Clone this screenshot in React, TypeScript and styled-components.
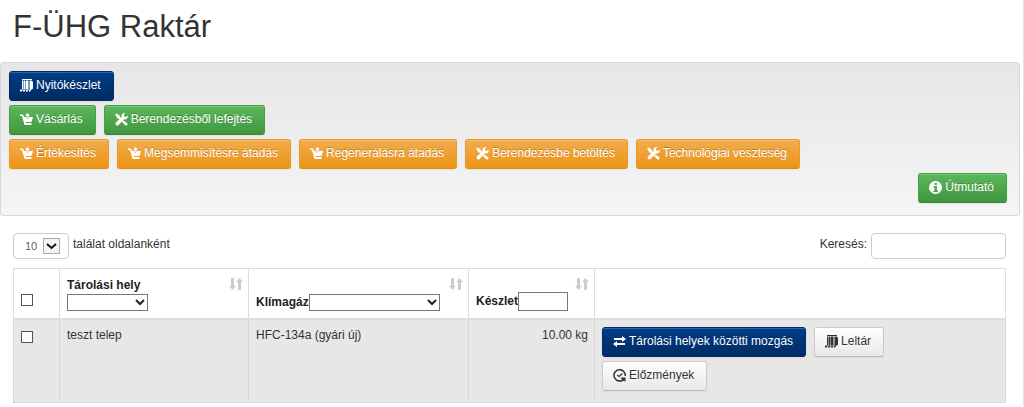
import React from 'react';
import styled, { createGlobalStyle, css } from 'styled-components';

const GlobalStyle = createGlobalStyle`
  *, *::before, *::after { box-sizing: border-box; }
  body {
    margin: 0;
    background: #fff;
    color: #333;
    font: 12px/20px "Liberation Sans", Arial, sans-serif;
  }
  button, input, select { font: inherit; color: inherit; margin: 0; }
`;

type Tone = 'navy' | 'green' | 'orange' | 'light';

const tones = {
  navy: css`
    color: #fff;
    border-color: #002b66;
    background: linear-gradient(#003e8a, #002c62);
    text-shadow: 0 -1px 0 rgba(0, 0, 0, 0.25);
  `,
  green: css`
    color: #fff;
    border-color: #459f45 #459f45 #37843a;
    background: linear-gradient(#5cb85c, #409640);
    text-shadow: 0 -1px 0 rgba(0, 0, 0, 0.25);
  `,
  orange: css`
    color: #fff;
    border-color: #e89a2c #e89a2c #e08e1a;
    background: linear-gradient(#f0ad4e, #ee9315);
    text-shadow: 0 -1px 0 rgba(0, 0, 0, 0.25);
  `,
  light: css`
    color: #333;
    border-color: #ccc #ccc #bbb;
    background: linear-gradient(#fff, #e8e8e8);
    text-shadow: 0 1px 1px rgba(255, 255, 255, 0.75);
  `,
};

const Page = styled.main`
  border-right: 1px solid #e4e4e4;
  padding-bottom: 3px;
`;

const Title = styled.h1`
  margin: 0;
  padding: 7px 13px 15px;
  font-size: 31px;
  line-height: 40px;
  font-weight: 400;
`;

const Panel = styled.section`
  display: flex;
  flex-direction: column;
  gap: 4px;
  margin-right: 3px;
  padding: 8px 12px 12px 8px;
  border: 1px solid #d8d8d8;
  border-radius: 3px;
  background: linear-gradient(#e6e6e6, #f5f5f5);
`;

const ButtonRow = styled.div<{ $end?: boolean }>`
  display: flex;
  flex-wrap: wrap;
  gap: 4px 8px;
  justify-content: ${p => (p.$end ? 'flex-end' : 'flex-start')};
`;

const RowActions = styled(ButtonRow)`
  padding: 0 8px 4px 0;
`;

const Button = styled.button<{ $tone: Tone }>`
  display: inline-flex;
  align-items: center;
  gap: 3px;
  height: 30px;
  padding: 0 12px 1px 10px;
  border: 1px solid;
  border-radius: 3px;
  box-shadow: inset 0 1px 0 rgba(255, 255, 255, 0.2), 0 1px 2px rgba(0, 0, 0, 0.05);
  white-space: nowrap;
  cursor: pointer;
  ${p => tones[p.$tone]}
`;

const Label = styled.span`
  padding-bottom: 1px;
`;

const Glyph = styled.svg`
  width: 13px;
  height: 13px;
  flex: none;
  fill: currentColor;
`;

const Toolbar = styled.div`
  display: flex;
  justify-content: space-between;
  align-items: center;
  padding: 17px 17px 9px 13px;
`;

const Field = styled.label`
  display: flex;
  align-items: center;
  gap: 4px;
`;

const FieldText = styled.span`
  padding-bottom: 4px;
`;

const SearchInput = styled.input`
  width: 135px;
  height: 26px;
  padding: 2px 6px;
  border: 1px solid #ccc;
  border-radius: 4px;
  background: #fff;
`;

const SelectWrap = styled.span`
  position: relative;
  display: inline-flex;
`;

const LengthSelect = styled.select`
  appearance: none;
  width: 56px;
  height: 26px;
  padding: 0 0 0 11px;
  border: 1px solid #ccc;
  border-radius: 4px;
  background: #fff;
  color: #666;
  font-size: 11px;
`;

const LengthArrow = styled.svg`
  position: absolute;
  right: 9px;
  top: 5px;
  width: 17px;
  height: 16px;
  pointer-events: none;
`;

const FilterSelect = styled.select<{ $width: number }>`
  appearance: none;
  width: ${p => p.$width}px;
  height: 17px;
  border: 1px solid #777;
  border-radius: 0;
  background: #fff;
`;

const FilterArrow = styled.svg`
  position: absolute;
  right: 3px;
  top: 4px;
  width: 10px;
  height: 8px;
  pointer-events: none;
`;

const FilterInput = styled.input`
  width: 50px;
  height: 19px;
  border: 1px solid #777;
  background: #fff;
`;

const TableArea = styled.div`
  padding: 0 17px 0 13px;
`;

const Table = styled.table`
  width: 100%;
  table-layout: fixed;
  border-collapse: collapse;
`;

const Col = styled.col<{ $width?: number }>`
  width: ${p => (p.$width ? `${p.$width}px` : 'auto')};
`;

const HeadCell = styled.th`
  padding: 8px 5px 7px 7px;
  border: 1px solid #ddd;
  border-bottom-width: 2px;
  text-align: left;
  vertical-align: bottom;
  line-height: 16px;
  color: #222;
`;

const Cell = styled.td<{ $right?: boolean }>`
  padding: 7px 6px 7px 7px;
  border: 1px solid #d8d8d8;
  background: #e7e7e7;
  text-align: ${p => (p.$right ? 'right' : 'left')};
  vertical-align: top;
  line-height: 16px;
`;

const HeadContent = styled.div`
  display: flex;
  justify-content: space-between;
  align-items: flex-end;
  min-height: 34px;
`;

const Filter = styled.label<{ $stacked?: boolean }>`
  display: flex;
  flex-direction: ${p => (p.$stacked ? 'column' : 'row')};
  align-items: ${p => (p.$stacked ? 'flex-start' : 'center')};
`;

const FilterName = styled.span`
  padding-bottom: 1px;
`;

const SortButton = styled.button`
  align-self: flex-start;
  display: flex;
  padding: 0;
  border: 0;
  background: none;
  color: #ccc;
  cursor: pointer;
`;

const SortGlyph = styled.svg`
  width: 14px;
  height: 14px;
  fill: currentColor;
`;

const Tick = styled.input`
  appearance: none;
  display: block;
  width: 12px;
  height: 12px;
  border: 1px solid #555;
  background: #fff;
  &:checked { background: #555; box-shadow: inset 0 0 0 2px #fff; }
`;

const HeadTick = styled(Tick)`
  margin-bottom: 5px;
`;

const RowTick = styled(Tick)`
  margin-top: 4px;
`;

const CartIcon = () => (
  <Glyph viewBox="0 0 26 26" aria-hidden="true">
    <path d="M0 3h6l2 5h4l3 4 3-4h8l-3 10H11l.6 2H23v4H9L4 6H0z" />
    <path d="M13 8V5h-3l5-5 5 5h-3v3l-2 2z" />
  </Glyph>
);

const ToolsIcon = () => (
  <Glyph viewBox="0 0 26 26" aria-hidden="true">
    <path d="M1 2l3-1 6 5 1 4 3 3-2 2-3-3-4-1-4-6z" />
    <path d="M25 5l-4 3-3-2 0-3 3-3c-5-1-9 3-8 8L2 19c-3 4 2 8 5 5L18 13c5 1 9-3 7-8z" />
    <path d="M17 15l8 6c1 2-2 5-4 4l-7-7z" />
  </Glyph>
);

const LuggageIcon = () => (
  <Glyph viewBox="0 0 26 26" aria-hidden="true">
    <path d="M4 0h20v2H4z" />
    <path d="M4 3h2v17H4zM7 3h4v17H7zM12 3h4v17h-4zM17 3h2v17h-2z" />
    <path d="M20 3h3l3 3v13l-4 3h-2z" />
    <path d="M0 22h4v3H0zM6 22h4v3H6zM12 22h4v3h-4zM18 22h3v3h-3z" />
    <path d="M0 20h22v3H0z" opacity=".5" />
  </Glyph>
);

const InfoIcon = () => (
  <Glyph viewBox="0 0 26 26" aria-hidden="true">
    <path fillRule="evenodd" d="M13 0a13 13 0 1 0 0 26 13 13 0 0 0 0-26zM11 4h5v4h-5zM9 10h7v9h2v3H9v-3h2v-6H9z" />
  </Glyph>
);

const TransferIcon = () => (
  <Glyph viewBox="0 0 26 26" aria-hidden="true">
    <path d="M2 6h16V2l8 6-8 6v-4H2zM24 16H8v-4l-8 6 8 6v-4h16z" />
  </Glyph>
);

const HistoryIcon = () => (
  <Glyph viewBox="0 0 26 26" aria-hidden="true">
    <path d="M18 23A11.300 11.300 0 1 1 24.500 14" fill="none" stroke="currentColor" strokeWidth="3" />
    <path d="M15 17h10v9l-3-3-4 2v-4z" />
    <path d="M8 12l4 3 7-6" fill="none" stroke="currentColor" strokeWidth="2.500" />
  </Glyph>
);

const icons = {
  cart: CartIcon,
  tools: ToolsIcon,
  luggage: LuggageIcon,
  info: InfoIcon,
  transfer: TransferIcon,
  history: HistoryIcon,
};

function ActionButton({ tone, icon, children }: { tone: Tone; icon: keyof typeof icons; children: string }) {
  const Icon = icons[icon];
  return (
    <Button type="button" $tone={tone}>
      <Icon />
      <Label>{children}</Label>
    </Button>
  );
}

function Sort({ column }: { column: string }) {
  return (
    <SortButton type="button" aria-label={`Rendezés: ${column}`}>
      <SortGlyph viewBox="0 0 14 14" aria-hidden="true">
        <path d="M2 1h3v8h2l-3.500 4L0 9h2zM9 13h3V5h2l-3.500-4L7 5h2z" />
      </SortGlyph>
    </SortButton>
  );
}

function FilterDropdown({ width }: { width: number }) {
  return (
    <SelectWrap>
      <FilterSelect $width={width} defaultValue="">
        <option value="" />
      </FilterSelect>
      <FilterArrow viewBox="0 0 10 8" aria-hidden="true">
        <path d="M1 2l4 4 4-4" fill="none" stroke="#222" strokeWidth="2" />
      </FilterArrow>
    </SelectWrap>
  );
}

export default function App() {
  return (
    <>
      <GlobalStyle />
      <Page>
        <Title>F-ÜHG Raktár</Title>
        <Panel>
          <ButtonRow>
            <ActionButton tone="navy" icon="luggage">Nyitókészlet</ActionButton>
          </ButtonRow>
          <ButtonRow>
            <ActionButton tone="green" icon="cart">Vásárlás</ActionButton>
            <ActionButton tone="green" icon="tools">Berendezésből lefejtés</ActionButton>
          </ButtonRow>
          <ButtonRow>
            <ActionButton tone="orange" icon="cart">Értékesítés</ActionButton>
            <ActionButton tone="orange" icon="cart">Megsemmisítésre átadás</ActionButton>
            <ActionButton tone="orange" icon="cart">Regenerálásra átadás</ActionButton>
            <ActionButton tone="orange" icon="tools">Berendezésbe betöltés</ActionButton>
            <ActionButton tone="orange" icon="tools">Technológiai veszteség</ActionButton>
          </ButtonRow>
          <ButtonRow $end>
            <ActionButton tone="green" icon="info">Útmutató</ActionButton>
          </ButtonRow>
        </Panel>

        <Toolbar>
          <Field>
            <SelectWrap>
              <LengthSelect defaultValue="10">
                <option>10</option>
                <option>25</option>
                <option>50</option>
              </LengthSelect>
              <LengthArrow viewBox="0 0 17 16" aria-hidden="true">
                <rect x=".5" y=".5" width="16" height="15" fill="#f4f4f4" stroke="#aaa" />
                <path d="M4 6l4.500 4L13 6" fill="none" stroke="#111" strokeWidth="2" />
              </LengthArrow>
            </SelectWrap>
            <FieldText>találat oldalanként</FieldText>
          </Field>
          <Field>
            <FieldText>Keresés:</FieldText>
            <SearchInput type="search" />
          </Field>
        </Toolbar>

        <TableArea>
          <Table>
            <colgroup>
              <Col $width={46} />
              <Col $width={189} />
              <Col $width={220} />
              <Col $width={126} />
              <Col />
            </colgroup>
            <thead>
              <tr>
                <HeadCell><HeadTick type="checkbox" aria-label="Összes kijelölése" /></HeadCell>
                <HeadCell>
                  <HeadContent>
                    <Filter $stacked>
                      <FilterName>Tárolási hely</FilterName>
                      <FilterDropdown width={81} />
                    </Filter>
                    <Sort column="Tárolási hely" />
                  </HeadContent>
                </HeadCell>
                <HeadCell>
                  <HeadContent>
                    <Filter>
                      <FilterName>Klímagáz</FilterName>
                      <FilterDropdown width={131} />
                    </Filter>
                    <Sort column="Klímagáz" />
                  </HeadContent>
                </HeadCell>
                <HeadCell>
                  <HeadContent>
                    <Filter>
                      <FilterName>Készlet</FilterName>
                      <FilterInput type="text" />
                    </Filter>
                    <Sort column="Készlet" />
                  </HeadContent>
                </HeadCell>
                <HeadCell />
              </tr>
            </thead>
            <tbody>
              <tr>
                <Cell><RowTick type="checkbox" aria-label="teszt telep" /></Cell>
                <Cell>teszt telep</Cell>
                <Cell>HFC-134a (gyári új)</Cell>
                <Cell $right>10.00 kg</Cell>
                <Cell>
                  <RowActions>
                    <ActionButton tone="navy" icon="transfer">Tárolási helyek közötti mozgás</ActionButton>
                    <ActionButton tone="light" icon="luggage">Leltár</ActionButton>
                    <ActionButton tone="light" icon="history">Előzmények</ActionButton>
                  </RowActions>
                </Cell>
              </tr>
            </tbody>
          </Table>
        </TableArea>
      </Page>
    </>
  );
}
